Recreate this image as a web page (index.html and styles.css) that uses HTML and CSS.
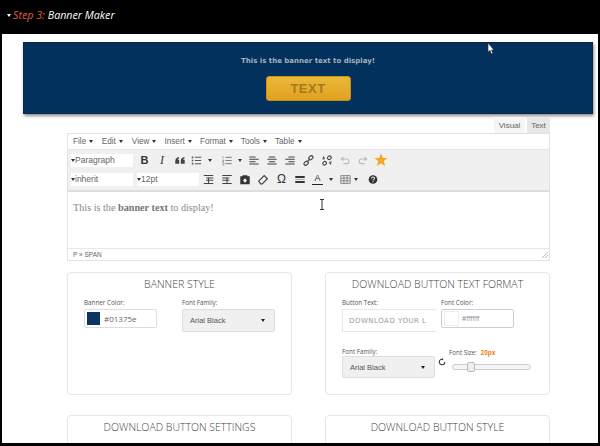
FILE: index.html
```html
<!DOCTYPE html>
<html lang="en">
<head>
<meta charset="utf-8">
<title>Banner Maker</title>
<link rel="stylesheet" href="styles.css">
</head>
<body>
<header class="top"><span class="tri"></span><em class="step">Step 3:</em><em class="name">Banner Maker</em></header>
<main class="sheet">
  <section class="banner">
    <p class="banner-text">This is the banner text to display!</p>
    <div class="banner-btn">TEXT</div>
  </section>
  <div class="wrap">
    <div class="tabs"><span class="tab">Visual</span><span class="tab tab-on">Text</span></div>
    <div class="editor">
      <nav class="menu">
        <span class="mi m1">File<i class="car"></i></span><span class="mi m2">Edit<i class="car"></i></span><span class="mi m3">View<i class="car"></i></span><span class="mi m4">Insert<i class="car"></i></span><span class="mi m5">Format<i class="car"></i></span><span class="mi m6">Tools<i class="car"></i></span><span class="mi">Table<i class="car"></i></span>
      </nav>
      <div class="bars">
        <div class="row">
          <span class="sel"><i class="car"></i>Paragraph</span>
          <div class="icons r1">
            <b class="g gb">B</b>
            <i class="g gi">I</i>
            <svg class="ic w20" viewBox="0 0 14 14"><path d="M1 7.5Q1 3.5 5.5 2.5L6 4Q4.300 4.500 4 6H6V11H1ZM8 7.500Q8 3.500 12.500 2.500L13 4Q11.300 4.500 11 6H13V11H8Z" fill="#444"/></svg>
            <svg class="ic w16" viewBox="0 0 14 14"><path d="M5 3H13M5 7H13M5 11H13" stroke="#555" stroke-width="1.300"/><path d="M1 2h2v2H1zM1 6h2v2H1zM1 10h2v2H1z" fill="#555"/></svg>
            <i class="car w11"></i>
            <svg class="ic w18" viewBox="0 0 14 14"><path d="M5 3H13M5 7H13M5 11H13" stroke="#777" stroke-width="1.200"/><path d="M2 1.500V4.500M1 6.500H3L1 8.500H3M1 10H3V13H1" stroke="#777" stroke-width=".8" fill="none"/></svg>
            <i class="car w13"></i>
            <svg class="ic w18" viewBox="0 0 14 14"><path d="M1 2.500H9M1 5.500H13M1 8.500H9M1 11.500H13" stroke="#444" stroke-width="1.400"/></svg>
            <svg class="ic w18" viewBox="0 0 14 14"><path d="M3 2.500H11M1 5.500H13M3 8.500H11M1 11.500H13" stroke="#444" stroke-width="1.400"/></svg>
            <svg class="ic w18" viewBox="0 0 14 14"><path d="M5 2.500H13M1 5.500H13M5 8.500H13M1 11.500H13" stroke="#444" stroke-width="1.400"/></svg>
            <svg class="ic w19" viewBox="0 0 14 14"><g fill="none" stroke="#444" stroke-width="1.500"><rect x="7" y="1.500" width="6" height="4" rx="2" transform="rotate(-45 10 3.500)"/><rect x="1" y="8.500" width="6" height="4" rx="2" transform="rotate(-45 4 10.500)"/><path d="M5 9L9 5"/></g></svg>
            <svg class="ic w18" viewBox="0 0 14 14"><g fill="none" stroke="#444" stroke-width="1.400"><rect x="7.500" y="1.500" width="5" height="4" rx="2" transform="rotate(-45 10 3.500)"/><rect x="1.500" y="8.500" width="5" height="4" rx="2" transform="rotate(-45 4 10.500)"/><path d="M2 2L4 5M10 9L12 12M1 5H3M11 9H13"/></g></svg>
            <svg class="ic w18" viewBox="0 0 14 14"><path d="M4 5H9A3 3 0 0 1 9 11H5" fill="none" stroke="#bbb" stroke-width="1.400"/><path d="M1 5L5 2V8Z" fill="#bbb"/></svg>
            <svg class="ic w18" viewBox="0 0 14 14"><path d="M10 5H5A3 3 0 0 0 5 11H9" fill="none" stroke="#bbb" stroke-width="1.400"/><path d="M13 5L9 2V8Z" fill="#bbb"/></svg>
            <svg class="ic star" viewBox="0 0 14 14"><path d="M7 .5L8.900 5H13.600L9.800 8L11.200 13L7 10.200L2.800 13L4.200 8L.4 5H5.100Z" fill="#f5a623"/></svg>
          </div>
        </div>
        <div class="row">
          <span class="sel"><i class="car"></i>inherit</span>
          <span class="sel"><i class="car"></i>12pt</span>
          <div class="icons r2">
            <svg class="ic w19" viewBox="0 0 14 14"><path d="M1 2H13M7 4V12M4 5H13M4 8H13M1 12H13" stroke="#444" stroke-width="1.300"/></svg>
            <svg class="ic w18" viewBox="0 0 14 14"><path d="M1 2H13M7 4V12M1 5H10M1 8H10M1 12H13" stroke="#444" stroke-width="1.300"/></svg>
            <svg class="ic w18" viewBox="0 0 14 14"><path d="M1 3H4V1.500H10V3H13V13H1Z" fill="#333"/><path d="M5.500 6H8.500V8H10L7 11L4 8H5.500Z" fill="#eee"/></svg>
            <svg class="ic w18" viewBox="0 0 14 14"><path d="M1.500 9L8.500 2L12.500 6L6 12.500H4Z" fill="none" stroke="#444" stroke-width="1.500"/></svg>
            <span class="g go">Ω</span>
            <svg class="ic w18" viewBox="0 0 14 14"><path d="M1 2.500H13V5H1ZM1 9H13V11.500H1Z" fill="#333"/><path d="M1 7H13" stroke="#999"/></svg>
            <span class="g ga">A</span>
            <i class="car w14"></i>
            <svg class="ic w16" viewBox="0 0 14 14"><path d="M1 2H13V12H1ZM1 5.300H13M1 8.600H13M5 2V12M9 2V12" fill="none" stroke="#666" stroke-width=".9"/></svg>
            <i class="car w12"></i>
            <svg class="ic help" viewBox="0 0 14 14"><circle cx="7" cy="7" r="5.500" fill="#333"/><path d="M5 5.500Q5.200 3.800 7 3.800T9 5.500C9 7 7 6.800 7 8.300M7 9.300V10.500" fill="none" stroke="#eee" stroke-width="1.300"/></svg>
          </div>
        </div>
      </div>
      <div class="content">This is the <strong>banner text</strong> to display!</div>
      <div class="status">P » SPAN<svg class="grip" viewBox="0 0 8 8"><path d="M7 1L1 7M7 4L4 7" stroke="#bbb"/></svg></div>
    </div>
    <div class="cards">
      <section class="card">
        <h2>BANNER STYLE</h2>
        <div class="fields f-banner">
          <div class="field">
            <label>Banner Color:</label>
            <div class="color"><span class="sw sw-navy"></span>#01375e</div>
          </div>
          <div class="field">
            <label>Font Family:</label>
            <div class="drop">Arial Black<i class="car dk"></i></div>
          </div>
        </div>
      </section>
      <section class="card">
        <h2>DOWNLOAD BUTTON TEXT FORMAT</h2>
        <div class="fields f-text">
          <div class="field">
            <label>Button Text:</label>
            <div class="txt">DOWNLOAD YOUR L</div>
          </div>
          <div class="field">
            <label>Font Color:</label>
            <div class="color c2"><span class="sw"></span>#ffffff</div>
          </div>
        </div>
        <div class="fields f-text2">
          <div class="field">
            <label>Font Family:</label>
            <div class="drop d2">Arial Black<i class="car dk"></i></div>
          </div>
          <svg class="spin" viewBox="0 0 10 10"><path d="M8.500 5A3.500 3.500 0 1 1 5 1.500" fill="none" stroke="#333" stroke-width="1.300"/><path d="M5 0V3L7 1.500Z" fill="#333"/></svg>
          <div class="field fs">
            <label>Font Size: <span class="px">20px</span></label>
            <div class="slider"><span class="thumb"></span></div>
          </div>
        </div>
      </section>
      <section class="card">
        <h2>DOWNLOAD BUTTON SETTINGS</h2>
      </section>
      <section class="card">
        <h2>DOWNLOAD BUTTON STYLE</h2>
      </section>
    </div>
  </div>
</main>
<svg class="pointer" viewBox="0 0 8 12"><path d="M1 0V9L3 7.500L4.500 11L6 10.300L4.500 7H7Z" fill="#fff" stroke="#222" stroke-width=".6"/></svg>
<svg class="ibeam" viewBox="0 0 6 11"><path d="M1 .5H5M3 .5V10.500M1 10.500H5" stroke="#333" fill="none"/></svg>
</body>
</html>
```
FILE: styles.css
```css
* { box-sizing: border-box; }
html, body { margin: 0; height: 446px; overflow: hidden; background: #000; }
body { font-family: "Liberation Sans", Arial, sans-serif; position: relative; }
.top { height: 34px; display: flex; align-items: center; padding: 0 0 4px 7px; font: italic 10.700px "Open Sans", sans-serif; color: #fff; }
.tri { width: 0; height: 0; border: 2.500px solid transparent; border-top: 3px solid #fff; border-bottom: 0; margin-right: 2px; }
.step { color: #e8593a; margin-right: 3px; }
.name { color: #fff; }
.sheet { width: 596px; height: 409px; margin-left: 2px; background: #fff; padding: 8px 0 0 21px; overflow: hidden; }
.banner { width: 570px; height: 72px; background: #01315c; border: 1px solid #0b2548; box-shadow: 1px 2px 3px rgba(0,0,0,.45); display: flex; flex-direction: column; align-items: center; padding-top: 14px; }
.banner-text { margin: 0; font: bold 7px "DejaVu Sans", sans-serif; line-height: 9px; color: #a9b1b9; }
.banner-btn { width: 85px; height: 25px; margin-top: 10px; border-radius: 3px; background: linear-gradient(#e9b83a, #e2a01f); border: 1px solid #c98d1a; color: #a5791c; font: bold 13px "Liberation Sans", sans-serif; letter-spacing: .5px; display: flex; align-items: center; justify-content: center; }
.wrap { width: 483px; margin-left: 44px; }
.tabs { height: 19px; padding-top: 3px; display: flex; justify-content: flex-end; gap: 2px; }
.tab { width: 31px; background: #f5f5f5; color: #666; font-size: 8px; display: flex; align-items: center; justify-content: center; }
.tab-on { width: 23px; background: #e8e8e8; }
.editor { border: 1px solid #e2e2e2; height: 128px; display: flex; flex-direction: column; }
.menu { height: 15px; display: flex; align-items: center; padding-left: 5px; font-size: 8.200px; color: #666; }
.mi { display: inline-flex; align-items: center; gap: 3px; margin-right: 8px; }
.m1 { margin-right: 8.500px; } .m2 { margin-right: 9px; }
.car { display: inline-block; width: 0; height: 0; border: 2.500px solid transparent; border-top: 3px solid #333; border-bottom: 0; flex: none; }
.bars { height: 43px; background: #f0f0f0; border-top: 1px solid #e4e4e4; border-bottom: 2px solid #ddd; padding: 3px 0 0 3px; display: flex; flex-direction: column; gap: 5px; }
.row { height: 14px; display: flex; align-items: center; gap: 4px; }
.sel { width: 62px; height: 13px; background: #fff; font-size: 8.500px; color: #666; display: flex; align-items: center; }
.icons { display: flex; align-items: center; height: 14px; }
.r1 { margin-left: -1px; }
.r2 { margin-left: -4px; }
.ic { height: 11px; flex: none; display: block; }
.w16 { width: 15px; } .w18 { width: 18px; } .w19 { width: 19px; } .w20 { width: 18px; }
.star { width: 18px; height: 14px; }
.car.w11 { margin: 0 6px 0 4px; }
.car.w12 { margin: 0 3px 0 1px; }
.car.w13 { margin: 0 3px 0 2px; }
.car.w14 { margin: 0 5px 0 3px; }
.g { width: 17px; text-align: center; font-style: normal; color: #333; flex: none; }
.gb { font: bold 11px "Liberation Sans", sans-serif; }
.gi { font: italic 12px "Liberation Serif", serif; width: 18px; }
.go { font: 12px "Liberation Sans", sans-serif; width: 19px; }
.ga { font: 9px "Liberation Sans", sans-serif; border-bottom: 1px solid #223; width: 11px; margin: 0 3px; line-height: 11px; }
.help { width: 12px; margin-left: 6px; }
.content { height: 56px; padding: 10px 5px; font: 10.200px "Liberation Serif", serif; color: #888; }
.content strong { color: #777; }
.status { height: 12px; flex: 1; border-top: 1px solid #e8e8e8; font-size: 6.500px; color: #666; padding: 2px 0 0 5px; display: flex; justify-content: space-between; }
.grip { width: 8px; height: 8px; }
.cards { display: grid; grid-template-columns: 225px 225px; column-gap: 33px; row-gap: 20px; grid-auto-rows: 123px; margin-top: 11px; }
.card { border: 1px solid #e6e6e6; border-radius: 4px; background: #fff; overflow: hidden; }
.card h2 { margin: 4px 0 0; font: 300 10.500px "Open Sans", sans-serif; color: #444; text-align: center; line-height: 14px; }
.fields { display: flex; }
.f-banner { padding: 7px 0 0 16px; gap: 25px; }
.f-text { padding: 7px 0 0 16px; gap: 5px; }
.f-text2 { padding: 15px 0 0 16px; }
label { display: block; font: 6.300px "Open Sans", sans-serif; color: #555; margin-bottom: 2px; line-height: 9px; }
.color { width: 73px; height: 19px; border: 1px solid #ddd; border-radius: 2px; font: 8px "Open Sans", sans-serif; color: #666; display: flex; align-items: center; gap: 4px; padding-left: 2px; }
.sw { width: 14px; height: 14px; background: #fff; border: 1px solid #eee; flex: none; }
.sw-navy { width: 13px; height: 13px; background: #0c3563; border-color: #0c3563; }
.c2 { color: #888; font-size: 6.500px; border-color: #ccd; gap: 3px; }
.c2 .sw { width: 15px; height: 15px; }
.drop { width: 93px; height: 23px; background: #f0f0f0; border: 1px solid #ddd; border-radius: 2px; font: 7.500px "Liberation Sans", sans-serif; color: #555; display: flex; align-items: center; justify-content: space-between; padding: 0 9px 0 7px; }
.d2 { height: 22px; margin-top: -2px; }
.car.dk { border-top-color: #222; }
.txt { width: 94px; height: 23px; border: 1px solid #e8e8e8; border-right: 0; font: 7px "DejaVu Sans", sans-serif; letter-spacing: .5px; color: #999; display: flex; align-items: center; padding-left: 6px; white-space: nowrap; }
.spin { width: 8px; height: 8px; margin: 11px 0 0 3px; flex: none; }
.fs { margin-left: 3px; }
.fs label { margin-bottom: 3px; margin-top: 1px; }
.px { color: #e98a1d; font-weight: 700; margin-left: 2px; }
.slider { width: 79px; height: 6px; border: 1px solid #ccc; border-radius: 3px; margin: 7px 0 0 3px; background: #f5f5f5; position: relative; }
.thumb { position: absolute; left: 14px; top: -3px; width: 8px; height: 10px; background: #eee; border: 1px solid #bbb; border-radius: 2px; }
.pointer { position: absolute; left: 487px; top: 43px; width: 8px; height: 12px; }
.ibeam { position: absolute; left: 319px; top: 199px; width: 6px; height: 11px; }
```
